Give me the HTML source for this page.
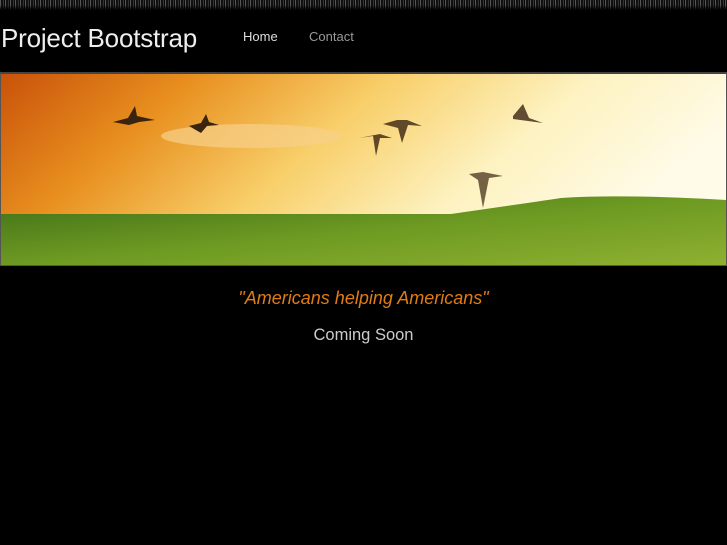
<!DOCTYPE html>
<html><head><style>
body{margin:0;width:727px;height:545px;background:#000;overflow:hidden;font-family:"Liberation Sans",Arial,sans-serif;position:relative}
.strip{position:absolute;left:0;top:0;width:727px;height:10px;background:repeating-linear-gradient(90deg,#555 0 1px,#111 1px 3px,#333 3px 4px,#0a0a0a 4px 5px);}
.strip:after{content:"";position:absolute;left:0;right:0;top:5px;height:5px;background:linear-gradient(#0000,#000)}
.title{position:absolute;left:1px;top:23px;font-size:26px;color:#eee;letter-spacing:-0.2px}
.nav{position:absolute;top:29px;font-size:13px}
.banner{position:absolute;left:0;top:72px;width:725px;height:191px;border:1px solid #555;border-top:2px solid #444;overflow:hidden}
.q{position:absolute;left:0;width:727px;text-align:center}
</style></head><body>
<div class="strip"></div>
<div class="title">Project Bootstrap</div>
<div class="nav" style="left:243px;color:#ddd">Home</div>
<div class="nav" style="left:309px;color:#999">Contact</div>
<div class="banner">
<svg width="725" height="191" viewBox="0 0 725 191">
<defs>
<linearGradient id="sky" x1="0" y1="0" x2="1" y2="0.3">
<stop offset="0" stop-color="#c9520a"/><stop offset="0.25" stop-color="#e8901f"/><stop offset="0.5" stop-color="#f8cf6a"/><stop offset="0.75" stop-color="#fdf2c0"/><stop offset="1" stop-color="#fffbe8"/></linearGradient>
<linearGradient id="gr" x1="0" y1="0" x2="1" y2="1">
<stop offset="0" stop-color="#3f6e18"/><stop offset="0.5" stop-color="#6d9a22"/><stop offset="1" stop-color="#8fb030"/></linearGradient>
</defs>
<rect width="725" height="191" fill="url(#sky)"/>
<ellipse cx="250" cy="62" rx="90" ry="12" fill="#f7d08a" opacity="0.7"/>
<path d="M0 140 L450 140 Q520 130 560 124 Q620 120 725 126 L725 191 L0 191Z" fill="url(#gr)"/>
<g fill="#3a2410">
<path d="M112 48 l15 -4 l7 -12 l2 10 l18 4 l-16 2 l-10 3z"/>
<path d="M188 52 l12 -3 l5 -9 l3 8 l10 3 l-12 1 l-6 7z"/>
<path d="M358 64 l14 -2 l3 20 l4 -18 l12 0 l-12 -4 z" opacity="0.8"/>
<path d="M382 50 l14 -4 l10 0 l15 6 l-14 -1 l-6 18 l-4 -15z" opacity="0.8"/>
<path d="M512 42 l10 -12 l6 14 l14 5 l-15 -2 l-15 -2z" opacity="0.8"/>
<path d="M468 100 l14 -2 l20 4 l-14 2 l-6 30 l-5 -28z" opacity="0.7"/>
</g>
</svg>
</div>
<div class="q" style="top:288px;font-size:18px;font-style:italic;color:#e07c14">"Americans helping Americans"</div>
<div class="q" style="top:326px;font-size:16.5px;color:#ccc">Coming Soon</div>
</body></html>
